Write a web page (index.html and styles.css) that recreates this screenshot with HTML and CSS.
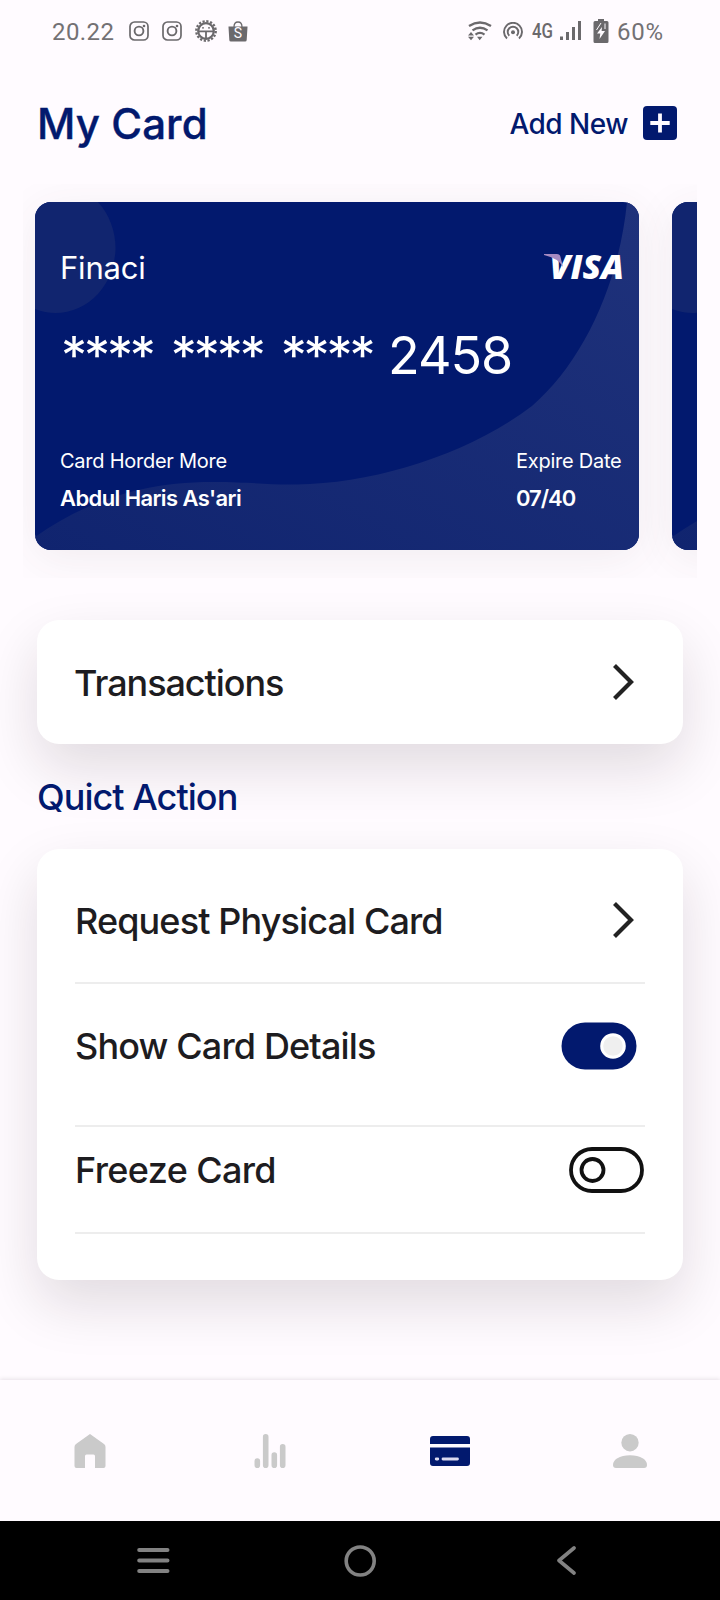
FILE: index.html
```html
<!DOCTYPE html>
<html lang="en">
<head>
<meta charset="utf-8">
<title>My Card</title>
<link rel="stylesheet" href="styles.css">
</head>
<body>
<svg class="defs" width="0" height="0">
  <defs>
    <linearGradient id="wave" x1="0" y1="1" x2="1" y2="0">
      <stop offset="0" stop-color="#10246f"/>
      <stop offset="1" stop-color="#1f327b"/>
    </linearGradient>
    <symbol id="insta" viewBox="0 0 20 20">
      <rect x="1" y="1" width="18" height="18" rx="4.5" fill="none" stroke="#6b696c" stroke-width="1.7"/>
      <circle cx="10" cy="10" r="4.4" fill="none" stroke="#6b696c" stroke-width="1.9"/>
      <circle cx="15" cy="5" r="1.3" fill="#6b696c"/>
    </symbol>
    <symbol id="card-art" viewBox="0 0 604 348">
      <ellipse cx="20.5" cy="46" rx="60" ry="65" fill="#11256f"/>
      <path fill="url(#wave)" d="M0 335C50 300 105 280 178 280C215 280 232 283 262 282.500C340 281 432 253 497 204C548 160 584 82 592 0H604V348H0Z"/>
    </symbol>
  </defs>
</svg>
<div class="screen">
  <div class="status">
    <span class="time">20.22</span>
    <svg class="i-app" width="20" height="20"><use href="#insta"/></svg>
    <svg class="i-app" width="20" height="20"><use href="#insta"/></svg>
    <svg class="i-gear" width="22" height="22" viewBox="0 0 22 22">
      <circle cx="11" cy="11" r="9.700" fill="none" stroke="#6b696c" stroke-width="2.400" stroke-dasharray="2.200 1.610"/>
      <circle cx="11" cy="11" r="7.800" fill="none" stroke="#6b696c" stroke-width="2.200"/>
      <path d="M3.500 11.300H18.500M11 11.300V19" stroke="#6b696c" stroke-width="1.800" fill="none"/>
      <path d="M7 7.800h2M13 7.800h2" stroke="#6b696c" stroke-width="1.200"/>
    </svg>
    <span class="bag">
      <svg width="20" height="21" viewBox="0 0 20 21"><path d="M.5 5.500H19.500L18.700 19Q18.600 20.500 17.100 20.500H2.900Q1.400 20.500 1.300 19Z" fill="#6b696c"/><path d="M6 6Q6 1 10 1T14 6" fill="none" stroke="#6b696c" stroke-width="1.300"/></svg>
      <b>S</b>
    </span>
    <span class="grow"></span>
    <svg class="i-wifi" width="24" height="20" viewBox="0 0 24 20" fill="none" stroke="#6b696c" stroke-width="2.300">
      <path d="M1 5Q12-2 23 5M4.500 9.400Q12 4 19.500 9.400M7.500 13.600Q12 10.200 16.500 13.600"/>
      <path d="M0 14.500L3 11L6 14.500ZM0 15.700H6L3 19.200ZM9 15.700H14.500L11.700 19.200Z" fill="#6b696c" stroke="none"/>
    </svg>
    <svg class="i-hot" width="20" height="18" viewBox="0 0 20 18" fill="none" stroke="#6b696c" stroke-width="1.900">
      <path d="M4 16.500A9 9 0 1 1 16 16.500M6.300 13.800A5.300 5.300 0 1 1 13.700 13.800"/><circle cx="10" cy="10.200" r="2" fill="#6b696c" stroke="none"/>
    </svg>
    <span class="net"><span>4G</span></span>
    <svg class="i-sig" width="22" height="20" viewBox="0 0 22 20" fill="#6b696c"><path d="M0 15.500h3V19H0zM6 11h3v8H6zM12 6h3v13h-3zM18 0h3v19h-3z"/></svg>
    <svg class="i-bat" width="16" height="24" viewBox="0 0 16 24"><path d="M5 0h6v2H14Q15.500 2 15.500 3.500V22.500Q15.500 24 14 24H2Q.5 24 .5 22.500V3.500Q.5 2 2 2H5Z" fill="#6b696c"/><path d="M9 8L4 14.500H7.300L6.500 20L12 12H8.600Z" fill="#fffbff"/><path d="M3.500 11L8 4M12 4.500V10" stroke="#fffbff" stroke-width="1" fill="none"/></svg>
    <span class="pct">60%</span>
  </div>

  <header class="head">
    <h1>My Card</h1>
    <span class="add">Add New</span>
    <svg width="34" height="34" viewBox="0 0 34 34"><rect width="34" height="34" rx="4" fill="#02196e"/><path d="M7.300 17H26.700M17 7.500V26.500" stroke="#fffbff" stroke-width="3.800"/></svg>
  </header>

  <div class="carousel">
    <div class="bank">
      <svg class="art" width="604" height="348"><use href="#card-art"/></svg>
      <div class="brand">
        <span class="finaci">Finaci</span>
        <span class="visa"><svg width="24" height="14" viewBox="0 0 24 14"><path d="M0 0H13Q16 0 16.500 3L19 13Q14 4 0 1Z" fill="#a58ac2"/></svg>VISA</span>
      </div>
      <div class="number"><span class="stars">**** **** ****</span><span class="digits">2458</span></div>
      <div class="info">
        <div><p class="label holder">Card Horder More</p><p class="value name">Abdul Haris As'ari</p></div>
        <div class="exp"><p class="label expire">Expire Date</p><p class="value date">07/40</p></div>
      </div>
    </div>
    <div class="bank"><svg class="art" width="604" height="348"><use href="#card-art"/></svg></div>
  </div>

  <section class="panel single">
    <span class="t1">Transactions</span>
    <svg class="chev" width="24" height="38" viewBox="0 0 24 38"><path d="M2.500 2.500L19 19L2.500 35.500" fill="none" stroke="#222" stroke-width="4.200"/></svg>
  </section>

  <h2>Quict Action</h2>

  <section class="panel list">
    <div class="row r1"><span class="t2">Request Physical Card</span>
      <svg class="chev" width="24" height="38" viewBox="0 0 24 38"><path d="M2.500 2.500L19 19L2.500 35.500" fill="none" stroke="#222" stroke-width="4.200"/></svg></div>
    <div class="row r2"><span class="t3">Show Card Details</span>
      <svg class="on" width="76" height="48" viewBox="0 0 76 48"><rect x=".5" y=".5" width="75" height="47" rx="23.500" fill="#02196e"/><circle cx="52" cy="24" r="11.300" fill="#efefef" stroke="#fff" stroke-width="3"/></svg></div>
    <div class="row r3"><span class="t4">Freeze Card</span>
      <svg class="off" width="75" height="46" viewBox="0 0 75 46" fill="none" stroke="#111" stroke-width="3.800"><rect x="2" y="2" width="71" height="42" rx="21"/><circle cx="23.500" cy="23" r="11"/></svg></div>
  </section>

  <nav class="tabs">
    <span><svg width="32" height="34" viewBox="0 0 32 34"><path d="M16 0L30 10Q31.500 11 31.500 13V32Q31.500 34 29.500 34H21V22Q21 20.500 19.500 20.500H12.500Q11 20.500 11 22V34H2.500Q.5 34 .5 32V13Q.5 11 2 10Z" fill="#cacaca"/></svg></span>
    <span><svg width="32" height="34" viewBox="0 0 32 34" stroke="#cacaca" stroke-width="5.600" stroke-linecap="round"><path d="M3.300 27V31.200M11.700 2.800V31.200M20.300 21V31.200M28.700 12.800V31.200"/></svg></span>
    <span><svg width="40" height="30" viewBox="0 0 40 30"><path d="M0 8V3Q0 0 3 0H37Q40 0 40 3V8ZM0 11.500H40V27Q40 30 37 30H3Q0 30 0 27Z" fill="#02196e"/><path d="M6.200 23H7.800M13 23H27.500" stroke="#dcdbf0" stroke-width="2.800" stroke-linecap="round"/></svg></span>
    <span><svg width="34" height="34" viewBox="0 0 34 34" fill="#cacaca"><circle cx="17" cy="8.700" r="8.700"/><path d="M0 31Q0 27 4 24.500Q9.500 21.300 17 21.300T30 24.500Q34 27 34 31Q34 34 31 34H3Q0 34 0 31Z"/></svg></span>
  </nav>

  <div class="sys">
    <svg width="33" height="25" viewBox="0 0 33 25" stroke="#828282" stroke-width="4" stroke-linecap="round"><path d="M2.200 2H30.500M2.200 12.500H30.500M2.200 23H30.500"/></svg>
    <svg width="32" height="32" viewBox="0 0 32 32"><circle cx="16.200" cy="16" r="14" fill="none" stroke="#828282" stroke-width="3.600"/></svg>
    <svg width="21" height="29" viewBox="0 0 21 29"><path d="M17 2L2 14.500L17 27" fill="none" stroke="#828282" stroke-width="3.600" stroke-linecap="round" stroke-linejoin="round"/></svg>
  </div>
</div>
</body>
</html>
```
FILE: styles.css
```css
* { box-sizing: border-box; margin: 0; padding: 0; }
body { background: #fffbff; font-family: Inter, "Liberation Sans", sans-serif; }
.defs { display: block; }
svg { display: block; flex: none; }
span, p, h1, h2 { white-space: nowrap; }
.screen { width: 720px; height: 1600px; display: flex; flex-direction: column; overflow: hidden; }
.grow { flex: 1; }

.status { height: 62px; padding: 0 54px 0 52px; display: flex; align-items: center; color: #737174; font-family: Roboto, sans-serif; font-weight: 400; font-size: 24px; }
.time { width: 77px; letter-spacing: .4px; padding-top: 1px; }
.i-app { margin-right: 13px; }
.i-gear { margin-right: 11px; }
.bag { position: relative; }
.bag b { position: absolute; left: 0; top: 5px; width: 20px; text-align: center; font-size: 14px; line-height: 15px; font-weight: 400; color: #fffbff; }
.i-wifi { margin-right: 11px; }
.i-hot { margin-right: 9px; }
.net { width: 28px; font-size: 21px; font-weight: 500; color: #6b696c; }
.net span { display: inline-block; transform: scaleX(.8); transform-origin: left; }
.i-sig { margin-right: 11px; }
.i-bat { margin-right: 8px; }
.pct { width: 49px; padding-top: 1px; letter-spacing: .7px; }

.head { height: 122px; padding: 0 43px 0 37px; display: flex; align-items: center; color: #02196e; }
h1 { flex: 1; font-size: 42px; font-weight: 500; line-height: 50px; letter-spacing: .1px; padding-top: 1px; -webkit-text-stroke: .4px #02196e; }
.add { font-size: 28px; font-weight: 500; margin-right: 15px; letter-spacing: -.5px; padding-top: 1px; }

.carousel { height: 394px; margin: 0 23px; padding: 18px 12px; display: flex; gap: 33px; overflow: hidden; align-items: flex-start; }
.bank { position: relative; flex: none; width: 604px; height: 348px; border-radius: 16px; background: #02196e; color: #fff; padding: 0 15px 0 25px; box-shadow: 0 8px 44px rgba(80, 60, 70, .08); }
.art { position: absolute; left: 0; top: 0; border-radius: 16px; }
.brand, .number, .info { position: relative; display: flex; justify-content: space-between; }
.brand { padding-top: 46px; height: 110px; }
.finaci { font-size: 31px; font-weight: 400; line-height: 40px; letter-spacing: -.2px; }
.visa { position: relative; font-family: "Open Sans", sans-serif; font-style: italic; font-weight: 800; font-size: 34px; line-height: 36px; }
.visa svg { position: absolute; left: -5px; top: 6px; }
.number { height: 136px; padding-left: 1px; justify-content: flex-start; font-size: 52px; line-height: 88px; font-weight: 400; }
.stars { width: 327px; letter-spacing: -3.100px; word-spacing: 6.500px; }
.digits { letter-spacing: -1px; }
.label { font-size: 20px; font-weight: 400; line-height: 26px; letter-spacing: -.25px; }
.exp { width: 108px; }
.value { font-size: 22px; font-weight: 600; line-height: 28px; margin-top: 10px; letter-spacing: -.6px; }
.date { letter-spacing: -1px; }

.panel { margin: 0 37px; background: #fff; border-radius: 22px; box-shadow: 0 24px 56px rgba(30, 15, 25, .135); color: #1d1c20; font-size: 36px; font-weight: 500; }
.single { height: 124px; margin-top: 42px; padding: 0 47.500px 0 37px; display: flex; align-items: center; justify-content: space-between; }
.t1 { letter-spacing: -1.050px; padding-top: 2px; }
.t2 { letter-spacing: -.88px; padding-top: 2px; }
.t3 { letter-spacing: -.85px; padding-top: 1px; }
.t4 { letter-spacing: -.62px; }
h2 { height: 105px; padding-left: 37px; line-height: 106px; font-size: 36px; font-weight: 500; letter-spacing: -.95px; color: #02196e; position: relative; }
.list { height: 431px; padding: 0 38px; position: relative; }
.row { display: flex; align-items: center; justify-content: space-between; border-bottom: 2px solid #ededed; }
.row .chev { margin-right: 9.500px; }
.r1 { height: 135px; padding-top: 8px; }
.r2 { height: 143px; padding-bottom: 18px; }
.r3 { height: 107px; padding-bottom: 20px; }
.on { margin-right: 8px; }
.off { margin-right: 1px; }

.tabs { height: 141px; margin-top: 100px; background: #fffbff; box-shadow: 0 -1px 4px rgba(60, 40, 60, .12); display: grid; grid-template-columns: repeat(4, 1fr); position: relative; }
.tabs span { display: flex; align-items: center; justify-content: center; }
.sys { height: 79px; background: #000; display: grid; grid-template-columns: 306px 108px 306px; align-items: center; justify-items: center; position: relative; }
```
